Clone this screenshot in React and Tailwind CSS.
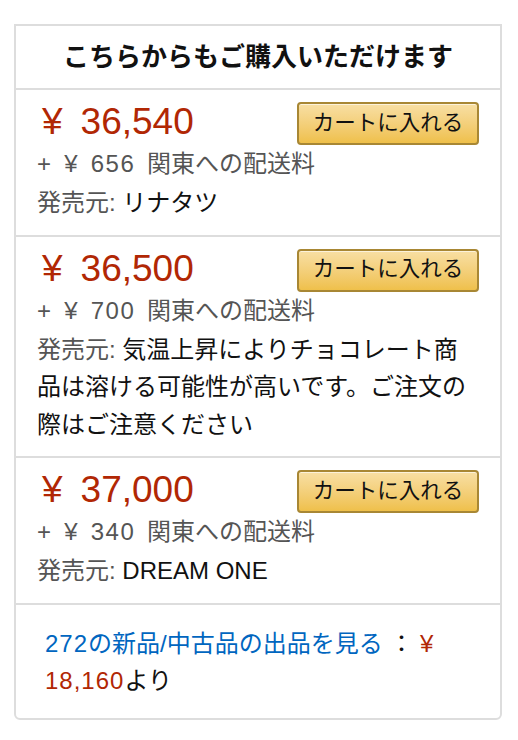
import React from "react";

const offers = [
  {
    price: "36,540",
    shipping: "656",
    seller: "リナタツ",
  },
  {
    price: "36,500",
    shipping: "700",
    seller: "気温上昇によりチョコレート商品は溶ける可能性が高いです。ご注文の際はご注意ください",
  },
  {
    price: "37,000",
    shipping: "340",
    seller: "DREAM ONE",
  },
];

function CartButton() {
  return (
    <button className="w-[182px] h-[43px] shrink-0 rounded-[4px] border-2 border-[#a88734] bg-gradient-to-b from-[#f8dfa3] to-[#efc04a] text-[21.5px] text-[#111] leading-none shadow-[inset_0_1px_0_rgba(255,255,255,0.6)]">
      カートに入れる
    </button>
  );
}

function OfferRow({ offer }) {
  return (
    <div className="border-b-2 border-[#ddd] px-[21px] pt-[12px] pb-[13px]">
      <div className="h-[42px] flex items-start justify-between">
        <div className="text-[37px] leading-[40px] text-[#b12704] pl-[5px]">
          <span>¥</span>
          <span className="ml-[18px]">{offer.price}</span>
        </div>
        <CartButton />
      </div>
      <div className="h-[40px] text-[24px] leading-[40px] text-[#555]">
        <span className="tracking-[1.5px] [word-spacing:3.5px]">+ ¥ {offer.shipping} </span>
        関東への配送料
      </div>
      <div className="text-[24px] leading-[37.5px] text-[#111]">
        <span className="text-[#555]">発売元: </span>
        {offer.seller}
      </div>
    </div>
  );
}

export default function App() {
  return (
    <div
      className="bg-white w-[518px] h-[740px] pt-[24px] pl-[14px]"
      style={{ fontFamily: '"Liberation Sans", "Noto Sans CJK JP", sans-serif' }}
    >
      <div className="w-[488px] border-2 border-[#ddd] rounded-b-[6px]">
        <div className="h-[64px] flex items-center justify-center border-b-2 border-[#ddd] text-[26px] font-bold text-[#111]">
          こちらからもご購入いただけます
        </div>
        {offers.map((o, i) => (
          <OfferRow key={i} offer={o} />
        ))}
        <div className="pl-[29px] pr-[21px] pt-[20.5px] pb-[19px] text-[24px] leading-[37px] text-[#111]">
          <span className="text-[#0066c0]">
            <span className="tracking-[1px]">272</span>の新品/中古品の出品を見る
          </span>
          <span> ： </span>
          <span className="text-[#b12704]">
            ¥ <span className="tracking-[1px]">18,160</span>
          </span>
          より
        </div>
      </div>
    </div>
  );
}
